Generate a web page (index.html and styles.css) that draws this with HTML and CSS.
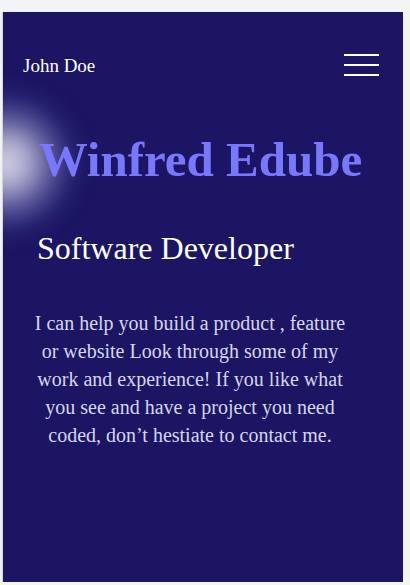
FILE: index.html
```html
<!DOCTYPE html>
<html>
<head>
<meta charset="utf-8">
<link rel="stylesheet" href="styles.css">
</head>
<body>
<div class="panel">
  <div class="glow"></div>
  <header class="topbar">
    <span class="brand">John Doe</span>
    <div class="burger">
      <span class="bar"></span>
      <span class="bar"></span>
      <span class="bar"></span>
    </div>
  </header>
  <h1 class="name">Winfred Edube</h1>
  <h2 class="role">Software Developer</h2>
  <p class="intro">I can help you build a product , feature or website Look through some of my work and experience! If you like what you see and have a project you need coded, don’t hestiate to contact me.</p>
</div>
</body>
</html>
```

FILE: styles.css
```css
html, body {
  margin: 0;
  background: #f3f4f6;
}
body {
  padding: 12px 0 0 3px;
  font-family: "Liberation Serif", "Times New Roman", serif;
}
.panel {
  position: relative;
  overflow: hidden;
  width: 400px;
  height: 570px;
  background: #1b1563;
  box-shadow: -1px 0 1px rgba(0,0,0,0.12);
  display: flex;
  flex-direction: column;
}
.glow {
  position: absolute;
  left: -82px;
  top: 66px;
  width: 170px;
  height: 170px;
  border-radius: 50%;
  background: radial-gradient(circle closest-side, rgba(210,210,228,1) 0%, rgba(195,195,222,0.85) 25%, rgba(140,140,200,0.5) 55%, rgba(80,80,160,0.18) 80%, rgba(27,21,99,0) 100%);
  filter: blur(6px);
}
.topbar {
  position: relative;
  display: flex;
  justify-content: space-between;
  align-items: center;
  padding: 43px 24px 0 20px;
}
.brand {
  color: #ffffff;
  font-size: 19px;
}
.burger {
  display: flex;
  flex-direction: column;
  gap: 8px;
  width: 35px;
  margin-top: -2px;
}
.bar {
  display: block;
  height: 2px;
  background: #ffffff;
}
.name {
  position: relative;
  margin: 55px 0 0 0;
  text-align: center;
  font-size: 49px;
  font-weight: bold;
  color: #7878ff;
  line-height: 1.15;
  padding-right: 5px;
}
.role {
  position: relative;
  margin: 42px 0 0 34px;
  font-size: 32px;
  font-weight: normal;
  color: #ffffff;
  line-height: 1.15;
}
.intro {
  position: relative;
  margin: 42px 48px 0 22px;
  font-size: 20px;
  line-height: 28px;
  color: #d6d6ee;
  text-align: center;
}
```
